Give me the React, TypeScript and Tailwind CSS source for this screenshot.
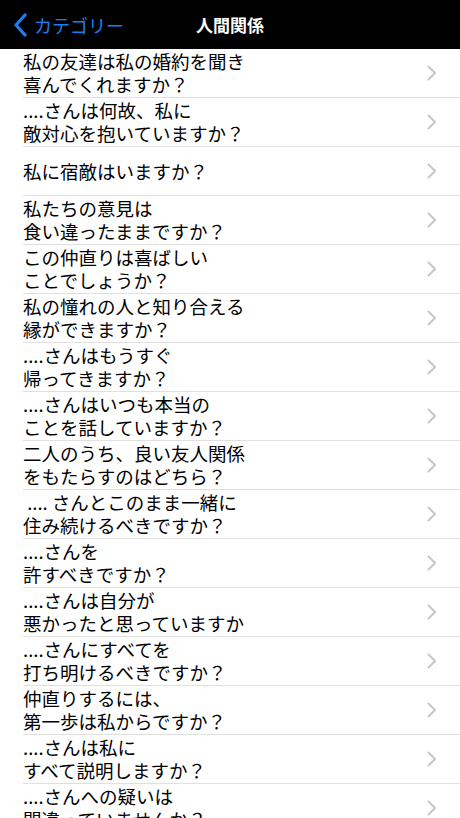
import React from "react";

const questions: string[][] = [
  ["私の友達は私の婚約を聞き", "喜んでくれますか？"],
  ["....さんは何故、私に", "敵対心を抱いていますか？"],
  ["私に宿敵はいますか？"],
  ["私たちの意見は", "食い違ったままですか？"],
  ["この仲直りは喜ばしい", "ことでしょうか？"],
  ["私の憧れの人と知り合える", "縁ができますか？"],
  ["....さんはもうすぐ", "帰ってきますか？"],
  ["....さんはいつも本当の", "ことを話していますか？"],
  ["二人のうち、良い友人関係", "をもたらすのはどちら？"],
  [" .... さんとこのまま一緒に", "住み続けるべきですか？"],
  ["....さんを", "許すべきですか？"],
  ["....さんは自分が", "悪かったと思っていますか"],
  ["....さんにすべてを", "打ち明けるべきですか？"],
  ["仲直りするには、", "第一歩は私からですか？"],
  ["....さんは私に", "すべて説明しますか？"],
  ["....さんへの疑いは", "間違っていませんか？"],
];

const Chevron = () => (
  <svg width="10" height="16" viewBox="0 0 10 16" fill="none">
    <path d="M1.5 1.5L8 8l-6.5 6.5" stroke="#c7c7cc" strokeWidth="2" strokeLinecap="round" strokeLinejoin="round" />
  </svg>
);

const App = () => {
  return (
    <div
      className="w-[460px] h-[818px] overflow-hidden bg-white"
      style={{ fontFamily: '"Noto Sans CJK JP", "Noto Sans", sans-serif' }}
    >
      <div className="h-[49px] bg-black relative flex items-center">
        <div className="flex items-center pl-[13px] gap-[6px] text-[#1a7ff5]">
          <svg width="15" height="24" viewBox="0 0 15 24" fill="none">
            <path d="M12 2L3 12l9 10" stroke="#1a7ff5" strokeWidth="3.2" strokeLinecap="round" strokeLinejoin="round" />
          </svg>
          <span className="text-[18px] leading-none">カテゴリー</span>
        </div>
        <div className="absolute left-0 right-0 text-center text-white font-bold text-[17px] pointer-events-none">
          人間関係
        </div>
      </div>
      <div>
        {questions.map((lines, i) => (
          <div key={i} className="pl-[23px]">
            <div className="h-[49px] border-b border-[#e0e0e0] flex items-center pr-[23px]">
              <div className="flex-1 text-[18.5px] leading-[23px] text-black whitespace-pre">
                {lines.map((l, j) => (
                  <div key={j}>{l}</div>
                ))}
              </div>
              <Chevron />
            </div>
          </div>
        ))}
      </div>
    </div>
  );
};

export default App;
